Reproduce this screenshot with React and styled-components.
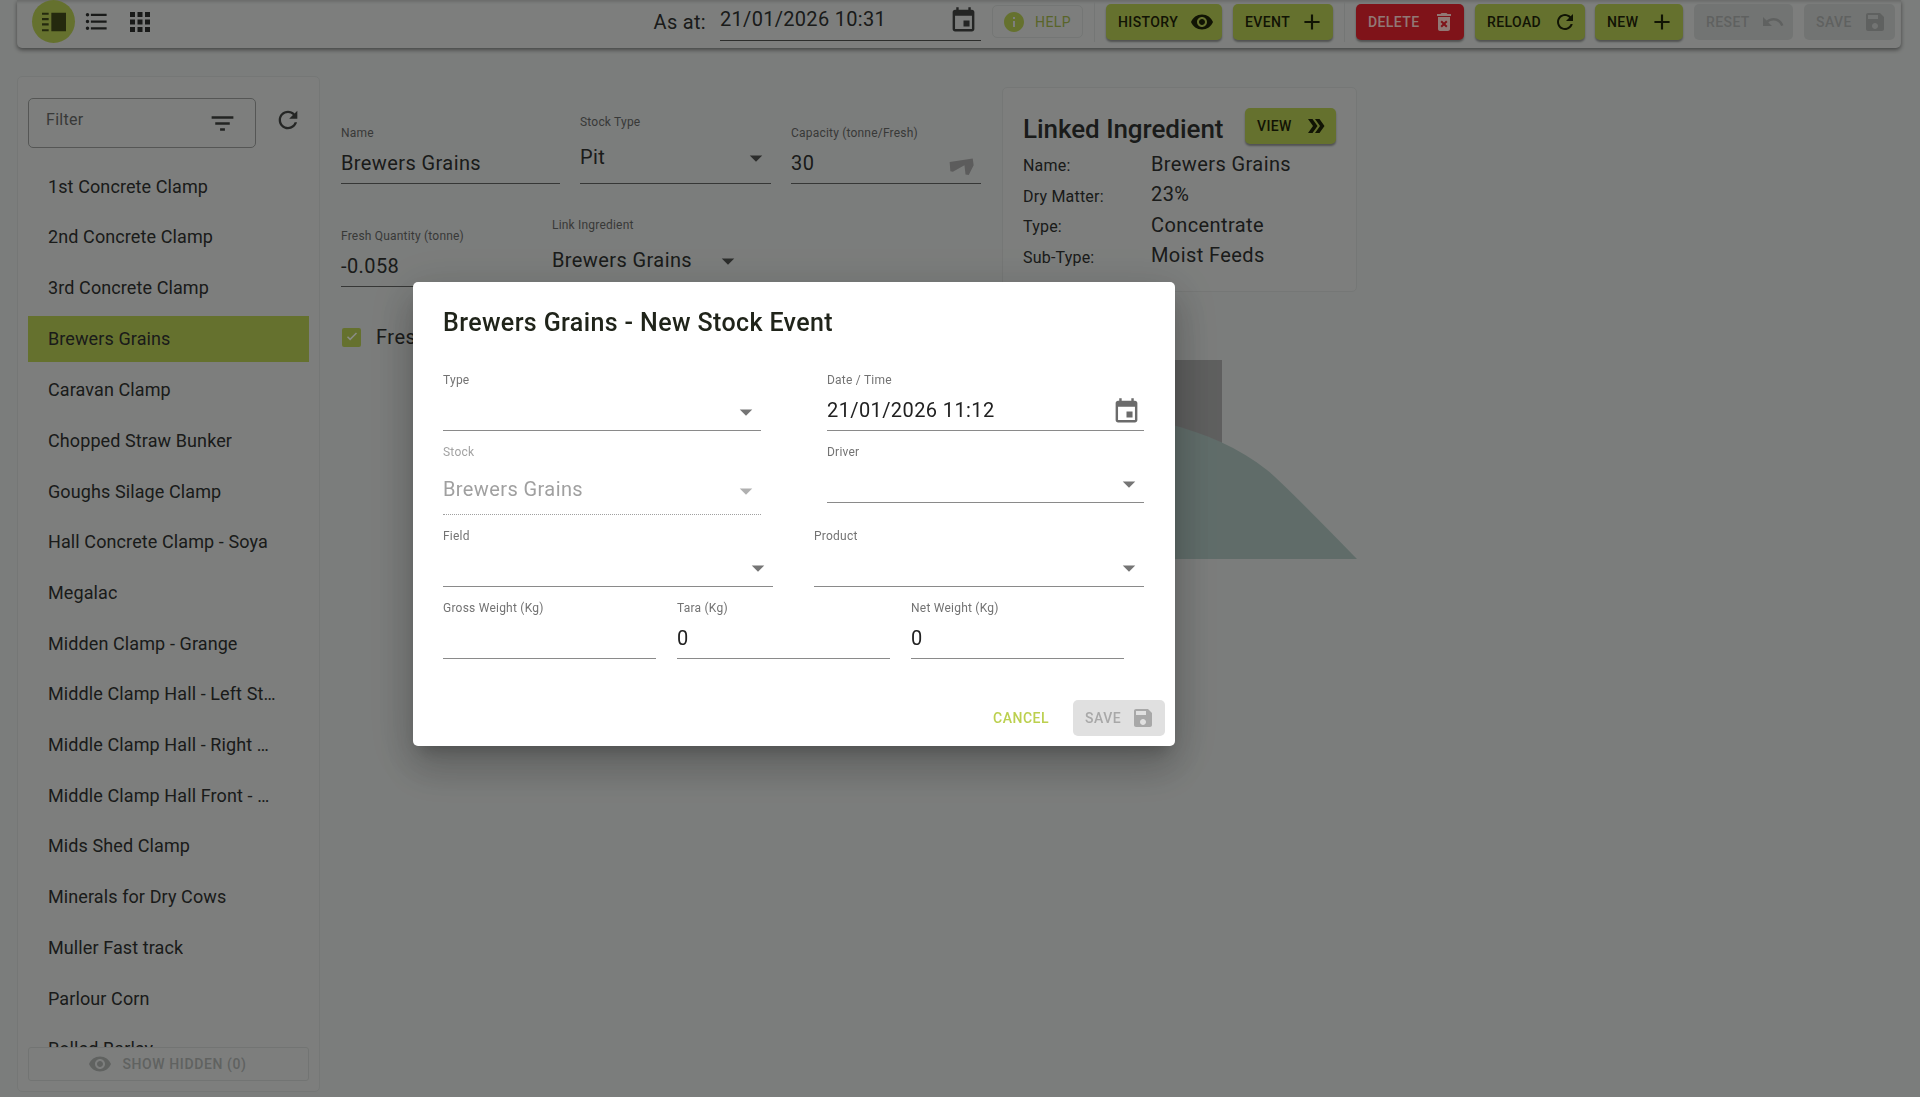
import React from 'react';
import styled, { createGlobalStyle } from 'styled-components';

const ICONS = {
  calendar: 'M17 12h-5v5h5v-5zM16 1v2H8V1H6v2H5c-1.11 0-1.99.9-1.99 2L3 19c0 1.1.89 2 2 2h14c1.1 0 2-.9 2-2V5c0-1.1-.9-2-2-2h-1V1h-2zm3 18H5V8h14v11z',
  eye: 'M12 4.5C7 4.5 2.73 7.61 1 12c1.73 4.39 6 7.5 11 7.5s9.27-3.11 11-7.5c-1.73-4.39-6-7.5-11-7.5zM12 17c-2.76 0-5-2.24-5-5s2.24-5 5-5 5 2.24 5 5-2.24 5-5 5zm0-8c-1.66 0-3 1.34-3 3s1.34 3 3 3 3-1.34 3-3-1.34-3-3-3z',
  add: 'M19 13h-6v6h-2v-6H5v-2h6V5h2v6h6v2z',
  refresh: 'M17.65 6.35C16.2 4.9 14.21 4 12 4c-4.42 0-7.99 3.58-7.99 8s3.57 8 7.99 8c3.73 0 6.84-2.55 7.73-6h-2.08c-.82 2.33-3.04 4-5.65 4-3.31 0-6-2.69-6-6s2.69-6 6-6c1.66 0 3.14.69 4.22 1.78L13 11h7V4l-2.35 2.35z',
  undo: 'M12.5 8c-2.65 0-5.05.99-6.9 2.6L2 7v9h9l-3.62-3.62c1.39-1.16 3.16-1.88 5.12-1.88 3.54 0 6.55 2.31 7.6 5.5l2.37-.78C21.08 11.03 17.15 8 12.5 8z',
  save: 'M17 3H5c-1.11 0-2 .9-2 2v14c0 1.1.89 2 2 2h14c1.1 0 2-.9 2-2V7l-4-4zm-5 16c-1.66 0-3-1.34-3-3s1.34-3 3-3 3 1.34 3 3-1.34 3-3 3zm3-10H5V5h10v4z',
  info: 'M12 2C6.48 2 2 6.48 2 12s4.48 10 10 10 10-4.48 10-10S17.52 2 12 2zm1 15h-2v-6h2v6zm0-8h-2V7h2v2z',
  trash: 'M6 19c0 1.1.9 2 2 2h8c1.1 0 2-.9 2-2V7H6v12zm2.46-7.12l1.41-1.41L12 12.59l2.12-2.12 1.41 1.41L13.41 14l2.12 2.12-1.41 1.41L12 15.41l-2.12 2.12-1.41-1.41L10.59 14l-2.13-2.12zM15.5 4l-1-1h-5l-1 1H5v2h14V4z',
  doubleArrow: 'M15.5 5H11l5 7-5 7h4.5l5-7zM8.5 5H4l5 7-5 7h4.5l5-7z',
  filter: 'M10 18h4v-2h-4v2zM3 6v2h18V6H3zm3 7h12v-2H6v2z',
  bullets: 'M4 10.5c-.83 0-1.5.67-1.5 1.5s.67 1.5 1.5 1.5 1.5-.67 1.5-1.5-.67-1.5-1.5-1.5zm0-6c-.83 0-1.5.67-1.5 1.5S3.17 7.5 4 7.5 5.5 6.83 5.5 6 4.83 4.5 4 4.5zm0 12c-.83 0-1.5.68-1.5 1.5s.68 1.5 1.5 1.5 1.5-.68 1.5-1.5-.67-1.5-1.5-1.5zM7 19h14v-2H7v2zm0-6h14v-2H7v2zm0-8v2h14V5H7z',
  grid: 'M4 8h4V4H4v4zm6 12h4v-4h-4v4zm-6 0h4v-4H4v4zm0-6h4v-4H4v4zm6 0h4v-4h-4v4zm6-10v4h4V4h-4zm-6 4h4V4h-4v4zm6 6h4v-4h-4v4zm0 6h4v-4h-4v4z',
  split: 'M3 5h5v1.6H3zM3 9h5v1.6H3zM3 13h5v1.6H3zM3 17.4h5V19H3zM10 5h11v14H10z',
  caret: 'M7 10l5 5 5-5z',
  tick: 'M9.5 16.6l-4.2-4.2 1.4-1.4 2.8 2.8 7.8-7.8 1.4 1.4z',
  weight: 'M1.4 8.5L21.2 5.6 22 11.3 17.8 19.8 15 19.2 14.1 11.3 4.2 16.9 2 16.4z',
};

const IconSvg = styled.svg`
  flex-shrink: 0;
  display: block;
`;

const Icon = ({ name, size = 24, color = 'currentColor' }) => (
  <IconSvg width={size} height={size} viewBox="0 0 24 24" fill={color}>
    <path d={ICONS[name]} />
  </IconSvg>
);

const stockItems = [
  '1st Concrete Clamp', '2nd Concrete Clamp', '3rd Concrete Clamp', 'Brewers Grains', 'Caravan Clamp',
  'Chopped Straw Bunker', 'Goughs Silage Clamp', 'Hall Concrete Clamp - Soya', 'Megalac', 'Midden Clamp - Grange',
  'Middle Clamp Hall - Left Stack', 'Middle Clamp Hall - Right Stack', 'Middle Clamp Hall Front - Stack', 'Mids Shed Clamp',
  'Minerals for Dry Cows', 'Muller Fast track', 'Parlour Corn', 'Rolled Barley',
];

const linked = [
  ['Name:', 'Brewers Grains'],
  ['Dry Matter:', '23%'],
  ['Type:', 'Concentrate'],
  ['Sub-Type:', 'Moist Feeds'],
];

const GREEN = '#a9bd4d';

const GlobalStyle = createGlobalStyle`
  html, body { margin: 0; padding: 0; height: 100%; overflow: hidden; }
  body { background: #ced1cf; font-family: Roboto, "Liberation Sans", sans-serif; color: #2c2e2c; }
  * { box-sizing: border-box; }
`;

const Page = styled.div`
  height: 1097px;
  padding: 0 19px 5px 17px;
  display: flex;
  flex-direction: column;
  overflow: hidden;
`;

const Toolbar = styled.header`
  height: 48px;
  flex-shrink: 0;
  display: flex;
  align-items: center;
  padding: 0 6px 5px 15px;
  background: #d0d3d1;
  border-radius: 0 0 5px 5px;
  box-shadow: 0 2px 4px rgba(0, 0, 0, 0.45), inset 0 3px 3px -1px rgba(0, 0, 0, 0.15);
`;

const ViewToggle = styled.span`
  width: 43px;
  height: 43px;
  display: flex;
  align-items: center;
  justify-content: center;
  border-radius: 50%;
  color: ${(p) => (p.$active ? '#3d4518' : '#2a2c2a')};
  background: ${(p) => (p.$active ? GREEN : 'transparent')};
`;

const ToolbarRight = styled.div`
  margin-left: auto;
  display: flex;
  align-items: center;
`;

const AsAtLabel = styled.span`
  font-size: 20px;
  letter-spacing: 0.3px;
  margin-right: 14px;
  margin-top: 1px;
`;

const AsAtField = styled.div`
  width: 261px;
  height: 39px;
  margin-right: 11px;
  display: flex;
  align-items: center;
  justify-content: space-between;
  padding: 0 3px 5px 0;
  font-size: 20px;
  letter-spacing: 0.3px;
  border-bottom: 1px solid #4a4c4a;
`;

const AsAtCalendar = styled.span`
  margin-top: 4px;
  color: #3c3e3c;
`;

const HelpButton = styled.span`
  width: 91px;
  height: 33px;
  display: flex;
  align-items: center;
  gap: 9px;
  padding-left: 9px;
  font-size: 14px;
  font-weight: 400;
  letter-spacing: 0.4px;
  color: #96a845;
  border: 1px solid #c2c5c3;
  border-radius: 5px;
`;

const Divider = styled.span`
  width: 1px;
  height: 40px;
  margin: 0 11px;
  background: #c2c5c3;
`;

const ActionButton = styled.span`
  width: ${(p) => p.$width}px;
  height: 36px;
  margin-right: ${(p) => p.$gap || 0}px;
  flex-shrink: 0;
  display: flex;
  align-items: center;
  justify-content: space-between;
  padding: 0 8px 0 12px;
  font-size: 14px;
  font-weight: 500;
  letter-spacing: 0.4px;
  border-radius: 5px;
  color: ${(p) => (p.$kind === 'danger' ? '#f2c9c4' : p.$kind === 'off' ? '#9fa2a0' : '#1d2208')};
  background: ${(p) => (p.$kind === 'danger' ? '#d4202b' : p.$kind === 'off' ? '#bfc2c0' : GREEN)};
  box-shadow: ${(p) => (p.$kind === 'off' ? 'none' : '0 2px 2px rgba(0, 0, 0, 0.35)')};
`;

const ViewButton = styled(ActionButton)`
  margin-top: -7px;
`;

const Main = styled.div`
  flex: 1;
  min-height: 0;
  margin-top: 28px;
  display: flex;
`;

const Sidebar = styled.aside`
  width: 303px;
  flex-shrink: 0;
  position: relative;
  display: flex;
  flex-direction: column;
  padding: 21px 10px 10px 10px;
  background: #d0d3d1;
  border: 1px solid #c4c7c5;
  border-radius: 5px;
`;

const FilterRow = styled.div`
  display: flex;
  align-items: flex-start;
  margin-bottom: 15.5px;
`;

const FilterBox = styled.div`
  width: 228px;
  height: 50px;
  flex-shrink: 0;
  display: flex;
  justify-content: space-between;
  padding: 11px 18px 0 17px;
  font-size: 16px;
  letter-spacing: 0.3px;
  color: #5e605e;
  border: 1px solid #8e908e;
  border-radius: 5px;
`;

const FilterIcon = styled.span`
  margin-top: -1px;
  color: #3a3c3a;
`;

const RefreshButton = styled.span`
  margin: 8px 0 0 18px;
  color: #3e403e;
`;

const StockList = styled.ul`
  list-style: none;
  margin: 0;
  padding: 0;
  flex: 1;
  min-height: 0;
  overflow: hidden;
`;

const StockItem = styled.li`
  height: ${(p) => (p.$selected ? 46 : 45)}px;
  margin-bottom: 5.7px;
  display: flex;
  align-items: center;
  padding-left: 20px;
  padding-right: 32px;
  font-size: 18px;
  letter-spacing: 0.1px;
  background: ${(p) => (p.$selected ? GREEN : 'transparent')};
  span {
    overflow: hidden;
    white-space: nowrap;
    text-overflow: ellipsis;
  }
`;

const ShowHidden = styled.div`
  position: absolute;
  left: 10px;
  right: 10px;
  bottom: 10px;
  height: 34px;
  display: flex;
  align-items: center;
  justify-content: center;
  gap: 10px;
  padding-right: 2px;
  font-size: 14px;
  font-weight: 500;
  letter-spacing: 0.6px;
  color: #a0a3a1;
  background: #d0d3d1;
  border: 1px solid #bfc2c0;
  border-radius: 3px;
`;

const Content = styled.section`
  flex: 1;
  min-width: 0;
  padding-left: 21px;
`;

const TopArea = styled.div`
  display: flex;
  align-items: flex-start;
`;

const FormArea = styled.div`
  width: 640px;
  flex-shrink: 0;
  padding-top: 39px;
`;

const FormRow = styled.div`
  display: flex;
  align-items: flex-end;
  gap: ${(p) => p.$gap}px;
  margin-top: ${(p) => p.$top || 0}px;
`;

const PageField = styled.div`
  width: ${(p) => p.$width}px;
  flex-shrink: 0;
`;

const PageLabel = styled.div`
  font-size: 12px;
  line-height: 14px;
  letter-spacing: 0.2px;
  color: #5e605e;
`;

const PageValue = styled.div`
  height: ${(p) => (p.$select ? 55 : 44)}px;
  padding-top: ${(p) => (p.$select ? 15 : 10)}px;
  display: flex;
  justify-content: space-between;
  font-size: 20px;
  letter-spacing: 0.4px;
  line-height: 26px;
  border-bottom: 1px solid #5a5c5a;
`;

const CaretSlot = styled.span`
  color: #4a4c4a;
  margin: -1px 0 0 0;
`;

const WeightSlot = styled.span`
  margin: 2px 5px 0 0;
  color: #9a9a9a;
`;

const CheckRow = styled.div`
  display: flex;
  align-items: center;
  gap: 15px;
  margin-top: 38px;
  margin-left: 1px;
  font-size: 20px;
  letter-spacing: 0.5px;
`;

const CheckBox = styled.span`
  width: 19px;
  height: 19px;
  display: flex;
  align-items: center;
  justify-content: center;
  border-radius: 2px;
  background: ${GREEN};
  color: #e6e9df;
`;

const LinkedCard = styled.div`
  width: 355px;
  height: 205px;
  margin: 11px 0 0 21px;
  padding: 26px 20px 0 20px;
  background: #d0d3d1;
  border: 1px solid #c4c7c5;
  border-radius: 5px;
`;

const LinkedHead = styled.div`
  display: flex;
  align-items: center;
  justify-content: space-between;
  margin-bottom: 5px;
`;

const LinkedTitle = styled.h3`
  margin: 0;
  font-size: 26px;
  font-weight: 500;
  letter-spacing: -0.05px;
`;

const LinkedRow = styled.div`
  display: grid;
  grid-template-columns: 128px 1fr;
  align-items: center;
  height: 30.5px;
`;

const LinkedKey = styled.span`
  font-size: 16px;
  letter-spacing: 0.2px;
  margin-top: 3px;
`;

const LinkedValue = styled.span`
  font-size: 20px;
  letter-spacing: 0.4px;
  margin-top: -1px;
`;

const Chart = styled.svg`
  display: block;
  margin-top: 11px;
`;

const Backdrop = styled.div`
  position: fixed;
  inset: 0;
  background: rgba(0, 0, 0, 0.4);
`;

const Dialog = styled.div`
  position: fixed;
  left: 413px;
  top: 282px;
  width: 762px;
  height: 464px;
  padding: 25px 31px 0 30px;
  background: #fff;
  border-radius: 5px;
  color: #212121;
  box-shadow: 0 11px 15px -7px rgba(0, 0, 0, 0.2), 0 24px 38px 3px rgba(0, 0, 0, 0.14), 0 9px 46px 8px rgba(0, 0, 0, 0.12);
`;

const DialogTitle = styled.h2`
  margin: 0 0 34px;
  font-size: 25px;
  line-height: 32px;
  font-weight: 500;
  letter-spacing: 0.38px;
  color: #20241a;
`;

const DialogRow = styled.div`
  display: flex;
  gap: ${(p) => p.$gap}px;
  height: ${(p) => p.$height}px;
  align-items: flex-start;
`;

const DField = styled.div`
  width: ${(p) => p.$width}px;
  flex-shrink: 0;
`;

const DLabel = styled.div`
  font-size: 12px;
  line-height: 14px;
  letter-spacing: 0.23px;
  color: ${(p) => (p.$disabled ? '#a3a3a3' : '#737373')};
`;

const DInput = styled.div`
  height: ${(p) => (p.$disabled ? 54 : 42)}px;
  margin-top: 2px;
  padding-top: ${(p) => (p.$disabled ? 16 : 9)}px;
  display: flex;
  justify-content: space-between;
  align-items: flex-start;
  font-size: 20px;
  line-height: 24px;
  letter-spacing: 0.4px;
  color: ${(p) => (p.$disabled ? '#a0a0a0' : '#212121')};
  border-bottom: 1px ${(p) => (p.$disabled ? 'dotted #a0a0a0' : 'solid #8a8a8a')};
`;

const DCaret = styled.span`
  margin: -1px 0.5px 0 0;
  color: ${(p) => (p.$disabled ? '#b0b0b0' : '#757575')};
`;

const DCalendar = styled.span`
  margin: -1px 3px 0 0;
  color: #6b6b6b;
`;

const DialogActions = styled.div`
  position: absolute;
  right: 10px;
  bottom: 10px;
  display: flex;
  align-items: center;
  gap: 24px;
`;

const CancelButton = styled.span`
  font-size: 14px;
  font-weight: 500;
  letter-spacing: 0.5px;
  color: #bcd04f;
`;

const SaveButton = styled.span`
  width: 92px;
  height: 36px;
  display: flex;
  align-items: center;
  justify-content: space-between;
  padding: 0 10px 0 12px;
  font-size: 14px;
  font-weight: 500;
  letter-spacing: 0.5px;
  color: #a8a8a8;
  background: #e0e0e0;
  border-radius: 5px;
`;

const DialogSelect = ({ label, width, disabled, value }) => (
  <DField $width={width}>
    <DLabel $disabled={disabled}>{label}</DLabel>
    <DInput $disabled={disabled}>
      <span>{value}</span>
      <DCaret $disabled={disabled}><Icon name="caret" size={30} /></DCaret>
    </DInput>
  </DField>
);

const DialogText = ({ label, width, value }) => (
  <DField $width={width}>
    <DLabel>{label}</DLabel>
    <DInput><span>{value}</span></DInput>
  </DField>
);

export default function App() {
  return (
    <>
      <GlobalStyle />
      <Page>
        <Toolbar>
          <ViewToggle $active><Icon name="split" size={32} /></ViewToggle>
          <ViewToggle><Icon name="bullets" size={27} /></ViewToggle>
          <ViewToggle><Icon name="grid" size={30} /></ViewToggle>
          <ToolbarRight>
            <AsAtLabel>As at:</AsAtLabel>
            <AsAtField>
              <span>21/01/2026 10:31</span>
              <AsAtCalendar><Icon name="calendar" size={29} /></AsAtCalendar>
            </AsAtField>
            <HelpButton><Icon name="info" size={24} color={GREEN} />HELP</HelpButton>
            <Divider />
            <ActionButton $width={116} $gap={11}>HISTORY<Icon name="eye" size={24} /></ActionButton>
            <ActionButton $width={100}>EVENT<Icon name="add" size={26} /></ActionButton>
            <Divider />
            <ActionButton $width={108} $gap={11} $kind="danger">DELETE<Icon name="trash" size={24} /></ActionButton>
            <ActionButton $width={110} $gap={10}>RELOAD<Icon name="refresh" size={24} /></ActionButton>
            <ActionButton $width={88} $gap={11}>NEW<Icon name="add" size={26} /></ActionButton>
            <ActionButton $width={99} $gap={11} $kind="off">RESET<Icon name="undo" size={24} /></ActionButton>
            <ActionButton $width={91} $kind="off">SAVE<Icon name="save" size={24} /></ActionButton>
          </ToolbarRight>
        </Toolbar>
        <Main>
          <Sidebar>
            <FilterRow>
              <FilterBox>
                Filter
                <FilterIcon><Icon name="filter" size={29} /></FilterIcon>
              </FilterBox>
              <RefreshButton><Icon name="refresh" size={28} /></RefreshButton>
            </FilterRow>
            <StockList>
              {stockItems.map((name) => (
                <StockItem key={name} $selected={name === 'Brewers Grains'}><span>{name}</span></StockItem>
              ))}
            </StockList>
            <ShowHidden><Icon name="eye" size={24} />SHOW HIDDEN (0)</ShowHidden>
          </Sidebar>
          <Content>
            <TopArea>
              <FormArea>
                <FormRow $gap={20}>
                  <PageField $width={219}>
                    <PageLabel>Name</PageLabel>
                    <PageValue>Brewers Grains</PageValue>
                  </PageField>
                  <PageField $width={191}>
                    <PageLabel>Stock Type</PageLabel>
                    <PageValue $select>Pit<CaretSlot><Icon name="caret" size={30} /></CaretSlot></PageValue>
                  </PageField>
                  <PageField $width={190}>
                    <PageLabel>Capacity (tonne/Fresh)</PageLabel>
                    <PageValue>30<WeightSlot><Icon name="weight" size={28} /></WeightSlot></PageValue>
                  </PageField>
                </FormRow>
                <FormRow $gap={0} $top={34}>
                  <PageField $width={211}>
                    <PageLabel>Fresh Quantity (tonne)</PageLabel>
                    <PageValue>-0.058</PageValue>
                  </PageField>
                  <PageField $width={191}>
                    <PageLabel>Link Ingredient</PageLabel>
                    <PageValue $select>Brewers Grains<CaretSlot><Icon name="caret" size={30} /></CaretSlot></PageValue>
                  </PageField>
                </FormRow>
                <CheckRow>
                  <CheckBox><Icon name="tick" size={18} /></CheckBox>
                  Fresh
                </CheckRow>
              </FormArea>
              <LinkedCard>
                <LinkedHead>
                  <LinkedTitle>Linked Ingredient</LinkedTitle>
                  <ViewButton $width={91}>VIEW<Icon name="doubleArrow" size={24} /></ViewButton>
                </LinkedHead>
                {linked.map(([key, value]) => (
                  <LinkedRow key={key}>
                    <LinkedKey>{key}</LinkedKey>
                    <LinkedValue>{value}</LinkedValue>
                  </LinkedRow>
                ))}
              </LinkedCard>
            </TopArea>
            <Chart width="1016" height="200" viewBox="0 0 1016 200">
              <rect x="610" y="0" width="271" height="199" fill="#9e9f9e" />
              <path d="M700 50 C 790 50 870 66 926 110 Q 941 122 1016 199 L 700 199 Z" fill="#a0b5b0" />
            </Chart>
          </Content>
        </Main>
        <Backdrop />
        <Dialog>
          <DialogTitle>Brewers Grains - New Stock Event</DialogTitle>
          <DialogRow $gap={66} $height={72}>
            <DialogSelect label="Type" width={318} />
            <DField $width={317}>
              <DLabel>Date / Time</DLabel>
              <DInput>
                <span>21/01/2026 11:12</span>
                <DCalendar><Icon name="calendar" size={29} /></DCalendar>
              </DInput>
            </DField>
          </DialogRow>
          <DialogRow $gap={66} $height={84}>
            <DialogSelect label="Stock" width={318} disabled value="Brewers Grains" />
            <DialogSelect label="Driver" width={317} />
          </DialogRow>
          <DialogRow $gap={41} $height={72}>
            <DialogSelect label="Field" width={330} />
            <DialogSelect label="Product" width={330} />
          </DialogRow>
          <DialogRow $gap={21} $height={72}>
            <DialogText label="Gross Weight (Kg)" width={213} />
            <DialogText label="Tara (Kg)" width={213} value="0" />
            <DialogText label="Net Weight (Kg)" width={213} value="0" />
          </DialogRow>
          <DialogActions>
            <CancelButton>CANCEL</CancelButton>
            <SaveButton>SAVE<Icon name="save" size={24} /></SaveButton>
          </DialogActions>
        </Dialog>
      </Page>
    </>
  );
}
